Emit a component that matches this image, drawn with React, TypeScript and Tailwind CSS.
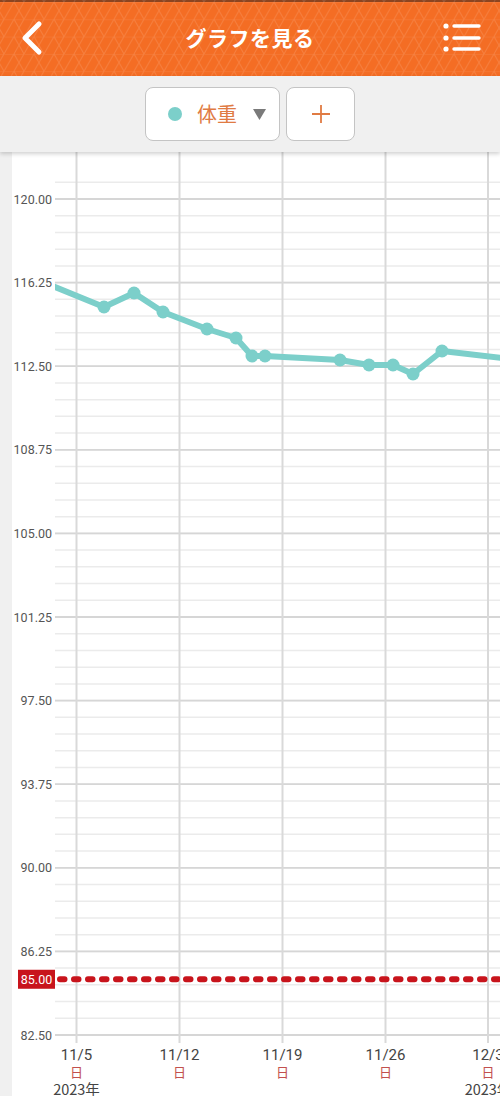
import React from 'react';

const JP = '"Noto Sans CJK JP", "Noto Sans", sans-serif';
const NUM = 'Roboto, "Noto Sans", sans-serif';

// chart geometry (page pixels)
const TOP_VALUE = 120;
const TOP_Y = 199;
const PX_PER_UNIT = 83.6 / 3.75;
const yOf = (v: number) => TOP_Y + (TOP_VALUE - v) * PX_PER_UNIT;

const majorTicks = [120, 116.25, 112.5, 108.75, 105, 101.25, 97.5, 93.75, 90, 86.25, 82.5];

const minorLines: number[] = [];
for (let y = TOP_Y - 16.72; y < 1036; y += 16.72) minorLines.push(y);

const weeks = [
  { x: 76.5, label: '11/5', year: true },
  { x: 179.5, label: '11/12' },
  { x: 282.5, label: '11/19' },
  { x: 385.5, label: '11/26' },
  { x: 488, label: '12/3', year: true },
];

// weight series; first and last entries sit outside the visible range
const points: [number, number][] = [
  [40, 281],
  [104, 307],
  [134, 293],
  [163, 312],
  [207, 329],
  [236, 338],
  [252, 356],
  [265, 356],
  [340, 360],
  [369, 365],
  [393, 365],
  [413, 374],
  [442, 351],
  [520, 360],
];

function Header() {
  return (
    <div className="relative h-[76px] bg-[#f46d24] overflow-hidden">
      <div className="absolute inset-x-0 top-0 h-[2px] bg-[#8c4420]" />
      <svg className="absolute inset-0" width="500" height="76">
        <defs>
          <pattern id="tri" width="20" height="17.3" patternUnits="userSpaceOnUse" x="4" y="2">
            <path
              d="M0 0H20M0 17.3L10 0L20 17.3M-10 0L0 17.3M10 17.3L20 0L30 17.3"
              stroke="rgba(255,255,255,0.13)"
              strokeWidth="1"
              fill="none"
            />
          </pattern>
        </defs>
        <rect width="500" height="76" fill="url(#tri)" />
      </svg>
      <div className="relative grid h-full grid-cols-[80px_1fr_80px] items-center">
        <svg className="ml-[20px]" width="26" height="36" viewBox="0 0 26 36">
          <path d="M19 4 L5 18 L19 32" stroke="white" strokeWidth="5" fill="none" strokeLinecap="round" strokeLinejoin="round" />
        </svg>
        <span className="text-center text-[21px] font-bold text-white tracking-[0.5px]" style={{ fontFamily: JP }}>
          グラフを見る
        </span>
        <svg className="ml-[21px]" width="40" height="32" viewBox="0 0 40 32">
          <circle cx="5" cy="4" r="2.6" fill="white" />
          <circle cx="5" cy="16" r="2.6" fill="white" />
          <circle cx="5" cy="27" r="2.6" fill="white" />
          <path d="M13 4H38M13 16H38M13 27H38" stroke="white" strokeWidth="3.4" strokeLinecap="round" />
        </svg>
      </div>
    </div>
  );
}

function Toolbar() {
  return (
    <div className="relative z-10 flex h-[76px] items-center justify-center gap-[6px] bg-[#f0f0f0] shadow-[0_2px_4px_rgba(0,0,0,0.18)]">
      <button className="flex h-[54px] w-[135px] items-center rounded-[8px] border border-[#c4c4c4] bg-white pl-[22px]">
        <span className="h-[14px] w-[14px] rounded-full bg-[#7ccfca]" />
        <span className="ml-[15px] text-[20px] text-[#e07b43]" style={{ fontFamily: JP }}>
          体重
        </span>
        <svg className="ml-[16px]" width="13" height="11" viewBox="0 0 13 11">
          <path d="M0 0H13L6.5 11Z" fill="#7a7a7a" />
        </svg>
      </button>
      <button className="flex h-[54px] w-[69px] items-center justify-center rounded-[8px] border border-[#c4c4c4] bg-white">
        <svg width="20" height="20" viewBox="0 0 20 20">
          <path d="M10 1V19M1 10H19" stroke="#e07b43" strokeWidth="1.8" />
        </svg>
      </button>
    </div>
  );
}

function WeightChart() {
  const line = points.map(([x, y]) => `${x},${y}`).join(' ');
  return (
    <svg width="488" height="944" viewBox="12 152 488 944" className="block">
      <defs>
        <clipPath id="plot">
          <rect x="55" y="152" width="445" height="900" />
        </clipPath>
      </defs>

      {minorLines.map((y) => (
        <line key={y} x1="55" x2="500" y1={y} y2={y} stroke="#ebebeb" strokeWidth="1.5" />
      ))}
      {majorTicks.map((v) => (
        <line key={v} x1="55" x2="500" y1={yOf(v)} y2={yOf(v)} stroke="#d6d6d6" strokeWidth="1.8" />
      ))}
      {weeks.map((w) => (
        <line key={w.label} x1={w.x} x2={w.x} y1="152" y2="1043" stroke="#d9d9d9" strokeWidth="2" />
      ))}

      {majorTicks.map((v) => (
        <text
          key={v}
          x="52"
          y={yOf(v) + 4.5}
          textAnchor="end"
          fontSize="12.5"
          fill="#555"
          style={{ fontFamily: NUM }}
        >
          {v.toFixed(2)}
        </text>
      ))}

      {/* target weight */}
      <line
        x1="60"
        x2="500"
        y1={yOf(85)}
        y2={yOf(85)}
        stroke="#c8141c"
        strokeWidth="6"
        strokeDasharray="4.5 9.5"
        strokeLinecap="round"
      />
      <rect x="18" y={yOf(85) - 9.5} width="37" height="19" fill="#c8141c" />
      <text x="36.5" y={yOf(85) + 4.5} textAnchor="middle" fontSize="12.5" fill="white" style={{ fontFamily: NUM }}>
        85.00
      </text>

      <g clipPath="url(#plot)">
        <polyline points={line} fill="none" stroke="#7ccfca" strokeWidth="6" strokeLinejoin="round" />
        {points.slice(1, -1).map(([x, y]) => (
          <circle key={x} cx={x} cy={y} r="6.5" fill="#7ccfca" />
        ))}
      </g>

      {weeks.map((w) => (
        <g key={w.label} style={{ fontFamily: NUM }}>
          <text x={w.x} y="1060" textAnchor="middle" fontSize="15" fill="#444">
            {w.label}
          </text>
          <text x={w.x} y="1077" textAnchor="middle" fontSize="13" fill="#c2504e" style={{ fontFamily: JP }}>
            日
          </text>
          {w.year && (
            <text x={w.x} y="1095" textAnchor="middle" fontSize="14.5" fill="#444" style={{ fontFamily: JP }}>
              2023年
            </text>
          )}
        </g>
      ))}
    </svg>
  );
}

export default function App() {
  return (
    <div className="h-[1096px] w-[500px] overflow-hidden bg-[#f0f0f0]">
      <Header />
      <Toolbar />
      <div className="ml-[12px] bg-white">
        <WeightChart />
      </div>
    </div>
  );
}
